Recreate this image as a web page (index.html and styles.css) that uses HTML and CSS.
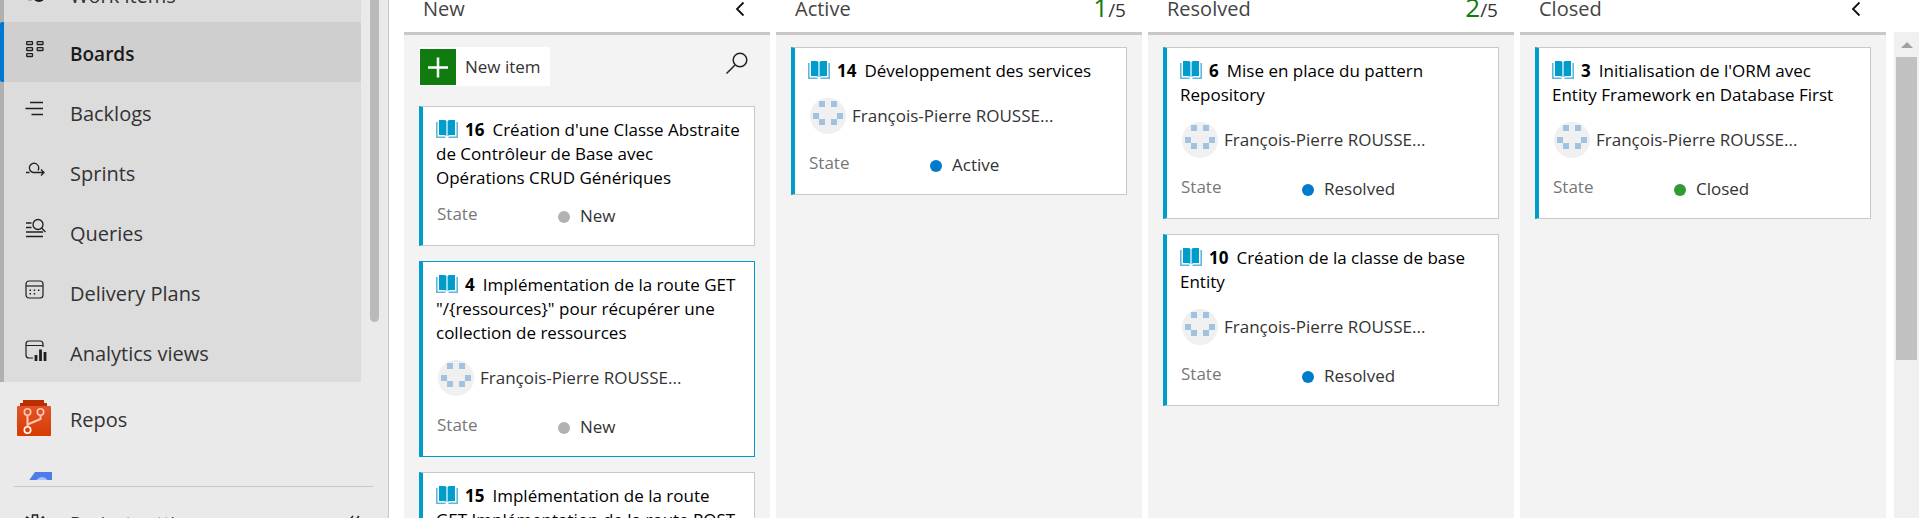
FILE: index.html
```html
<!DOCTYPE html>
<html lang="en">
<head>
<meta charset="utf-8">
<title>Boards</title>
<link rel="stylesheet" href="styles.css">
</head>
<body>
<svg class="defs" aria-hidden="true">
  <symbol id="book" viewBox="0 0 22 18">
    <path fill="#009ccc" d="M3 0h5q2 0 2.400 1v15q-1-1-3-1h-4.400zM19 0h-5q-2 0-2.400 1v15q1-1 3-1h4.400z"/>
    <path fill="#5fb8da" d="M0 2h1.600v14.500h7.400l1 1.500h-10zM22 2h-1.600v14.500h-7.400l-1 1.500h10z"/>
  </symbol>
  <symbol id="avatar" viewBox="0 0 36 36">
    <circle cx="18" cy="18" r="18" fill="#f0f0f0"/>
    <path fill="#a0c3e2" d="M9 3h6v6H9zM21 3h6v6h-6zM3 15h6v6H3zM27 15h6v6h-6zM9 21h6v6H9zM21 21h6v6h-6z"/>
  </symbol>
  <symbol id="chevron" viewBox="0 0 10 16">
    <path d="M8.500 1.500L2 8l6.500 6.500" fill="none" stroke="#111" stroke-width="1.800"/>
  </symbol>
</svg>
<div class="app">
  <aside class="sidebar">
    <nav class="nav">
      <div class="nav-list">
        <div class="group">
          <a class="item first" href="#"><svg class="icon" viewBox="0 0 24 24" fill="none" stroke="#1f1f1f"><path d="M9 4H5q-2 0-2 2v11q0 2.500 2.500 2.500H8" stroke-width="1.500"/><circle cx="15" cy="16" r="6" fill="#1f1f1f" stroke="none"/><path d="M12 16l2 2 4-4" stroke="#dcdcdc"/></svg><span>Work items</span></a>
          <a class="item selected" href="#"><svg class="icon" viewBox="0 0 24 24" fill="none" stroke="#1f1f1f" stroke-width="1.300"><rect x="2.700" y="3.700" width="5.800" height="2.800" rx=".6"/><rect x="2.700" y="9.700" width="5.800" height="2.800" rx=".6"/><rect x="2.700" y="15.700" width="5.800" height="2.800" rx=".6"/><rect x="13.200" y="3.700" width="5.800" height="2.800" rx=".6"/><rect x="13.200" y="9.700" width="5.800" height="2.800" rx=".6"/></svg><span>Boards</span></a>
          <a class="item" href="#"><svg class="icon" viewBox="0 0 24 24" fill="none" stroke="#1f1f1f" stroke-width="1.300"><path d="M6 4.500h13M1.500 10.500H19M7.500 16.500H19"/></svg><span>Backlogs</span></a>
          <a class="item" href="#"><svg class="icon" viewBox="0 0 24 24" fill="none" stroke="#1f1f1f" stroke-width="1.300"><path d="M2 14.500h3.500M9 14.500h11M17 11.500l3 3-3 3M14 12.500a4.700 4.700 0 1 0-5 2"/></svg><span>Sprints</span></a>
          <a class="item" href="#"><svg class="icon" viewBox="0 0 24 24" fill="none" stroke="#1f1f1f" stroke-width="1.300"><circle cx="14" cy="6.500" r="5"/><path d="M17.500 10l4 4M2 5h5.500M2 9.500h5.500M2 14h17M2 18.500h17"/></svg><span>Queries</span></a>
          <a class="item" href="#"><svg class="icon" viewBox="0 0 24 24" fill="none" stroke="#1f1f1f" stroke-width="1.200"><rect x="2" y="3" width="17" height="17" rx="3"/><path d="M2 8h17"/><path d="M5.500 12.300h1.500M9.700 12.300h1.500M13.900 12.300h1.500M5.500 15.800h1.500M9.700 15.800h1.500" stroke-width="1.500"/></svg><span>Delivery Plans</span></a>
          <a class="item" href="#"><svg class="icon" viewBox="0 0 24 24" fill="none" stroke="#1f1f1f" stroke-width="1.200"><path d="M9 20H5q-3 0-3-3V6q0-3 3-3h11q3 0 3 3v3M2 7.500h17"/><path d="M12 17v6M16.500 11.500V23M21 14v9" stroke-width="2.800"/></svg><span>Analytics views</span></a>
        </div>
        <a class="item service" href="#"><svg class="logo" viewBox="0 0 36 36"><defs><linearGradient id="red" x1="0" y1="0" x2="0" y2="1"><stop offset="0" stop-color="#e2552a"/><stop offset="1" stop-color="#d83b01"/></linearGradient></defs><path d="M7 0h21v3h3v4H4V3h3z" fill="#b92f00"/><rect x="1" y="6" width="34" height="30" rx="1" fill="url(#red)"/><g fill="none" stroke="#ffc8b4" stroke-width="1.600"><path d="M11.500 15v12M11.500 26.500v-2l13-5.500V15" stroke-width="2"/><circle cx="11.500" cy="12" r="3.200"/><circle cx="24.500" cy="12" r="3.200"/><circle cx="11.500" cy="30" r="3.200" stroke="#fff"/></g></svg><span>Repos</span></a>
        <a class="item service" href="#" aria-label="Pipelines"><svg class="logo" viewBox="0 0 36 36"><path d="M19 0h17v36H8V18l6-11z" fill="#4f7de8"/><circle cx="26" cy="11" r="6" fill="#a9c2ff"/></svg></a>
      </div>
      <div class="nav-scroll"></div>
    </nav>
    <footer class="settings">
      <svg class="icon" viewBox="0 0 24 24" fill="none" stroke="#1f1f1f" stroke-width="1.500"><path d="M8.500 5V2h5v3l3 1.500L19 4l3 4-3 3v3l3 3-3 4-3-2-2.500 1.500V23h-5v-3l-3-1.500L3 21l-3-4 3-3v-3L0 8l3-4 3 2.500z"/><circle cx="11" cy="12.500" r="3"/></svg>
      <a href="#">Project settings</a>
      <button class="plain" aria-label="Collapse"><svg width="14" height="16" viewBox="0 0 14 16" fill="none" stroke="#1f1f1f" stroke-width="1.500"><path d="M7 1L1 8l6 7M13 1L7 8l6 7"/></svg></button>
    </footer>
  </aside>
  <main class="board">
    <section class="column">
      <header class="head"><h2>New</h2><button class="plain" aria-label="Collapse column"><svg class="chev"><use href="#chevron"/></svg></button></header>
      <div class="cards">
        <div class="tools">
          <button class="new-item"><svg width="36" height="36" viewBox="0 0 36 36"><path fill="#107c10" d="M0 0h36v36H0z"/><path d="M8 18.500h20M18 8.500v20" stroke="#fff" stroke-width="2.500"/></svg><span>New item</span></button>
          <button class="plain find" aria-label="Search"><svg width="22" height="22" viewBox="0 0 22 22" fill="none" stroke="#222" stroke-width="1.500"><circle cx="14" cy="8" r="6.800"/><path d="M9 13l-8.500 8.500"/></svg></button>
        </div>
        <article class="card">
          <h3><svg class="book"><use href="#book"/></svg><b>16</b>Création d'une Classe Abstraite de Contrôleur de Base avec Opérations CRUD Génériques</h3>
          <div class="state"><span class="label">State</span><span class="dot"></span><span>New</span></div>
        </article>
        <article class="card active">
          <h3><svg class="book"><use href="#book"/></svg><b>4</b>Implémentation de la route GET "/{ressources}" pour récupérer une collection de ressources</h3>
          <div class="person"><svg class="avatar"><use href="#avatar"/></svg><span>François-Pierre ROUSSE...</span></div>
          <div class="state"><span class="label">State</span><span class="dot"></span><span>New</span></div>
        </article>
        <article class="card">
          <h3><svg class="book"><use href="#book"/></svg><b>15</b>Implémentation de la route<br>GET Implémentation de la route POST</h3>
          <div class="state"><span class="label">State</span><span class="dot"></span><span>New</span></div>
        </article>
      </div>
    </section>
    <section class="column">
      <header class="head"><h2>Active</h2><span class="limit"><b>1</b>/5</span></header>
      <div class="cards">
        <article class="card">
          <h3><svg class="book"><use href="#book"/></svg><b>14</b>Développement des services</h3>
          <div class="person"><svg class="avatar"><use href="#avatar"/></svg><span>François-Pierre ROUSSE...</span></div>
          <div class="state"><span class="label">State</span><span class="dot blue"></span><span>Active</span></div>
        </article>
      </div>
    </section>
    <section class="column">
      <header class="head"><h2>Resolved</h2><span class="limit"><b>2</b>/5</span></header>
      <div class="cards">
        <article class="card">
          <h3><svg class="book"><use href="#book"/></svg><b>6</b>Mise en place du pattern<br>Repository</h3>
          <div class="person"><svg class="avatar"><use href="#avatar"/></svg><span>François-Pierre ROUSSE...</span></div>
          <div class="state"><span class="label">State</span><span class="dot blue"></span><span>Resolved</span></div>
        </article>
        <article class="card">
          <h3><svg class="book"><use href="#book"/></svg><b>10</b>Création de la classe de base Entity</h3>
          <div class="person"><svg class="avatar"><use href="#avatar"/></svg><span>François-Pierre ROUSSE...</span></div>
          <div class="state"><span class="label">State</span><span class="dot blue"></span><span>Resolved</span></div>
        </article>
      </div>
    </section>
    <section class="column">
      <header class="head"><h2>Closed</h2><button class="plain" aria-label="Collapse column"><svg class="chev"><use href="#chevron"/></svg></button></header>
      <div class="cards">
        <article class="card">
          <h3><svg class="book"><use href="#book"/></svg><b>3</b>Initialisation de l'ORM avec Entity Framework en Database First</h3>
          <div class="person"><svg class="avatar"><use href="#avatar"/></svg><span>François-Pierre ROUSSE...</span></div>
          <div class="state"><span class="label">State</span><span class="dot green"></span><span>Closed</span></div>
        </article>
      </div>
    </section>
  </main>
  <div class="scrollbar"><svg width="12" height="6" viewBox="0 0 12 6"><path d="M0 6l6-6 6 6z" fill="#a0a0a0"/></svg><div class="thumb"></div></div>
</div>
</body>
</html>
```
FILE: styles.css
```css
* { box-sizing: border-box; }
body { margin: 0; font-family: "Open Sans", "Noto Sans", sans-serif; font-size: 17px; line-height: 24px; color: #333; background: #fff; }
h2, h3 { margin: 0; font-weight: 400; }
a { color: inherit; text-decoration: none; }
button { font: inherit; color: inherit; border: 0; padding: 0; margin: 0; }
svg { display: block; flex: none; }
.defs { position: absolute; width: 0; height: 0; }
.plain { background: none; }
.app { display: flex; height: 100vh; overflow: hidden; }

.sidebar { flex: none; width: 389px; display: flex; flex-direction: column; background: #eaeaea; border-right: 1px solid #c8c8c8; font-size: 20px; }
.nav { flex: 1; min-height: 0; display: flex; gap: 9px; overflow: hidden; }
.nav-list { width: 361px; margin-top: -38px; }
.group { background: #dcdcdc; border-left: 4px solid #b0b0b0; }
.item { display: flex; align-items: center; gap: 22px; height: 60px; padding-left: 20px; }
.item .icon { margin-bottom: 4px; }
.icon { width: 24px; height: 24px; }
.item span { padding-top: 3px; }
.first { padding-top: 4px; }
.selected { margin-left: -4px; border-left: 4px solid #0078d4; border-radius: 2px; background: #cfcfcf; color: #1a1a1a; font-weight: 600; font-size: 19px; }
.service { height: 72px; padding-left: 16px; gap: 18px; }
.logo { width: 36px; height: 36px; }
.nav-scroll { width: 9px; height: 322px; background: #bababa; border-radius: 0 0 5px 5px; }
.settings { flex: none; display: flex; align-items: flex-start; gap: 22px; height: 32px; margin: 6px 15px 0 14px; padding: 26px 13px 0 10px; border-top: 1px solid #c8c8c8; font-size: 19px; }
.settings a { flex: 1; line-height: 20px; }
.settings button { padding-top: 2px; }

.board { flex: 1; min-width: 0; display: grid; grid-template-columns: repeat(4, minmax(0, 1fr)); gap: 6px; margin: 0 8px 0 15px; }
.column { display: flex; flex-direction: column; min-height: 0; }
.head { flex: none; display: flex; justify-content: space-between; align-items: center; height: 35px; padding: 0 20px 15px 19px; border-bottom: 3px solid #c8c8c8; }
.head h2 { font-size: 20px; color: #444; }
.head .plain { padding-right: 5px; }
.chev { width: 10px; height: 16px; }
.limit { font-size: 19px; margin-right: -4px; }
.limit b { font-size: 26px; font-weight: 400; color: #107c10; }
.cards { flex: 1; min-height: 0; overflow: hidden; display: flex; flex-direction: column; gap: 15px; padding: 12px 15px; background: #f3f3f3; }
.tools { flex: none; display: flex; justify-content: space-between; align-items: flex-start; height: 39px; margin-bottom: 5px; }
.new-item { display: flex; align-items: center; gap: 9px; height: 39px; padding: 0 9px 0 1px; background: #fff; }
.find { padding: 5px 7px; }
.card { flex: none; padding: 11px 12px 19px 13px; background: #fff; border: 1px solid #c8c8c8; border-left: 4px solid #009ccc; color: #333; }
.card.active { border-color: #009ccc; }
.card h3 { font-size: 17px; color: #000; }
.card h3 b { margin: 0 8px 0 7px; font-weight: 700; }
.book { display: inline-block; width: 22px; height: 18px; vertical-align: -2px; }
.person { display: flex; align-items: center; gap: 6px; height: 36px; margin: 15px 2px 17px; }
.avatar { width: 36px; height: 36px; }
.state { display: grid; grid-template-columns: 111px 12px 1fr; column-gap: 10px; align-items: center; height: 24px; margin: 12px 2px 0 1px; }
.person + .state { margin-top: 0; }
.label { color: #777; padding-bottom: 4px; }
.dot { width: 12px; height: 12px; margin-top: 2px; border-radius: 50%; background: #b2b2b2; }
.blue { background: #007acc; }
.green { background: #339933; }
.scrollbar { flex: none; width: 25px; margin-top: 32px; padding: 10px 2px; background: #f0f0f0; display: flex; flex-direction: column; align-items: center; gap: 9px; }
.thumb { width: 21px; height: 303px; background: #c1c1c1; }
```
